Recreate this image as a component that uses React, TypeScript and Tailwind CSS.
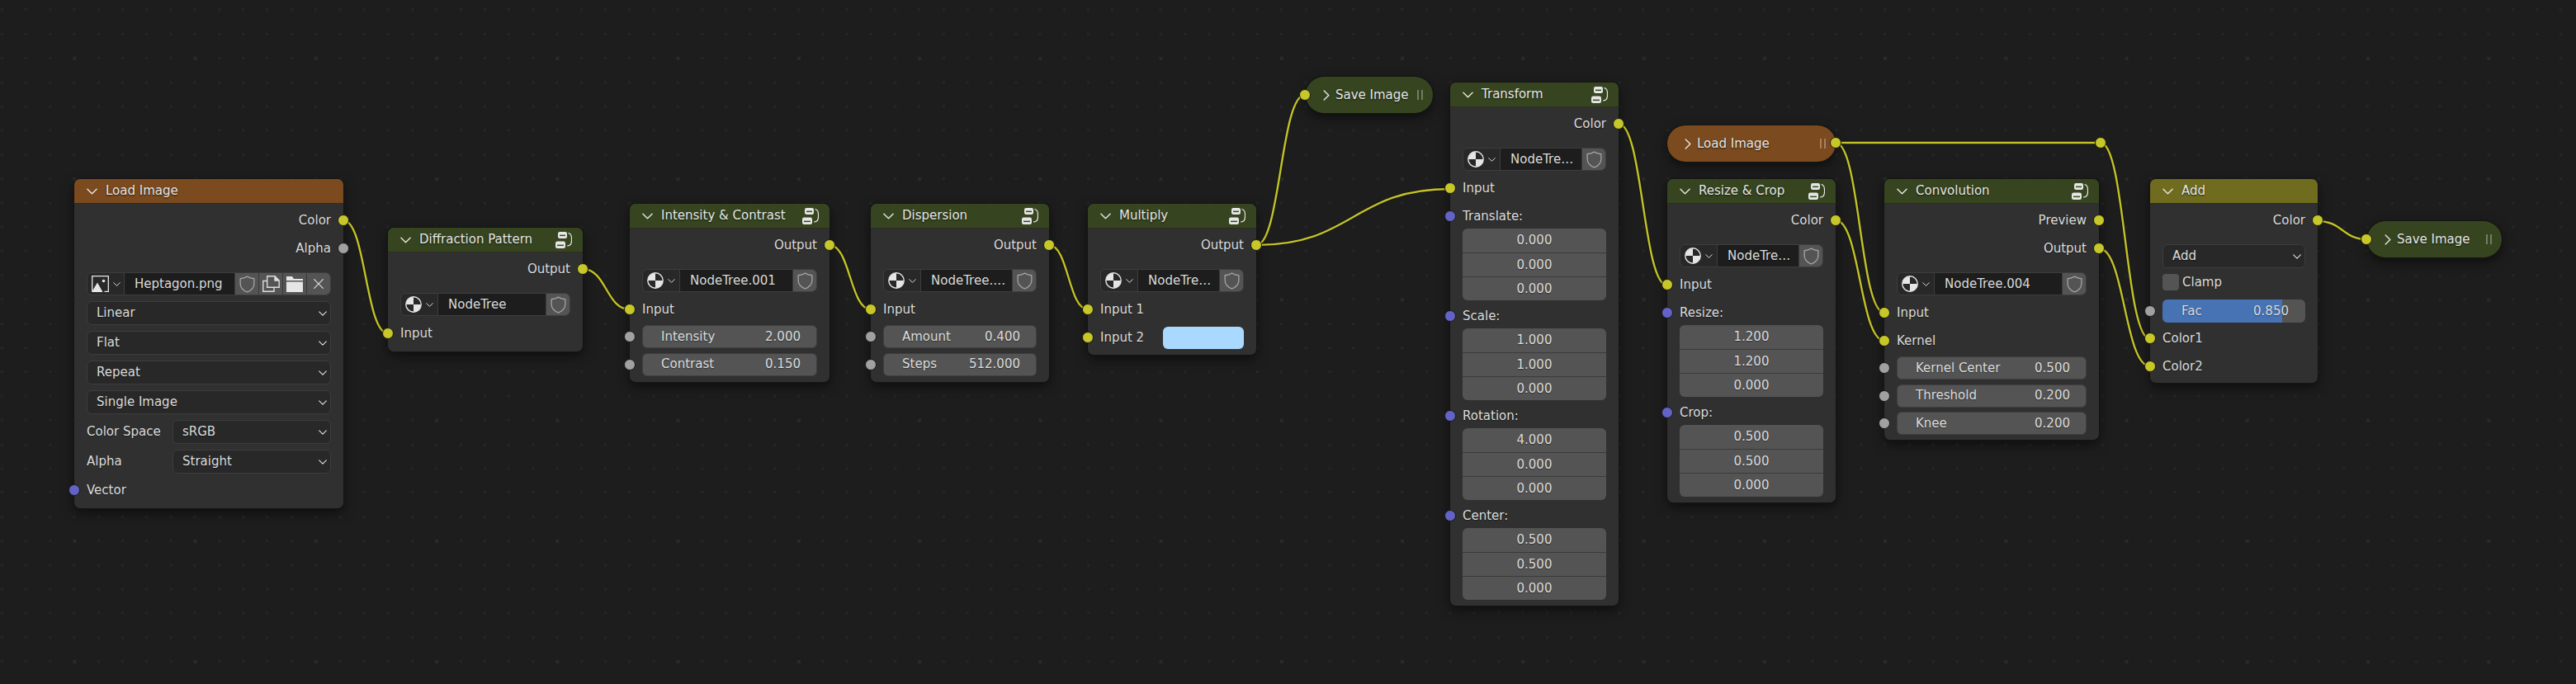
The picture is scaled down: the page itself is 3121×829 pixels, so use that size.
import React from 'react';

const WIRES: [number, number, number, number][] = [
  [416, 267, 470, 404],
  [706, 326, 763, 375],
  [1005, 297, 1055, 375],
  [1271, 297, 1318, 375],
  [1522, 297, 1581, 115],
  [1522, 297, 1757, 229],
  [1961, 150, 2020, 346],
  [2224, 267, 2283, 413],
  [2224, 173, 2283, 379],
  [2224, 173, 2545, 173],
  [2545, 173, 2605, 411],
  [2543, 301, 2605, 444],
  [2808, 268, 2868, 290],
];

function wirePath([x1, y1, x2, y2]: [number, number, number, number]) {
  const h = (x2 - x1) * 0.5;
  return `M${x1} ${y1} C${x1 + h} ${y1} ${x2 - h} ${y2} ${x2} ${y2}`;
}

function ChevronDown({ className }: { className?: string }) {
  return (
    <svg viewBox="0 0 14 8" className={className} fill="none" stroke="currentColor" strokeWidth="1.5" strokeLinecap="round" strokeLinejoin="round">
      <path d="M1 1l6 6 6-6" />
    </svg>
  );
}

function ChevronRight() {
  return (
    <svg viewBox="0 0 8 14" className="h-[13px] w-[8px] shrink-0 text-[#e6e6e6]" fill="none" stroke="currentColor" strokeWidth="1.5" strokeLinecap="round" strokeLinejoin="round">
      <path d="M1 1l6 6-6 6" />
    </svg>
  );
}

function GroupIcon() {
  return (
    <svg viewBox="0 0 20 20" className="h-[20px] w-[20px] shrink-0">
      <rect x="3" y="0" width="11" height="8" rx="2.2" fill="#e6e6e6" />
      <rect x="5" y="3.6" width="7" height="1.5" fill="#3a4722" />
      <rect x="0" y="11.5" width="12" height="8.5" rx="2.2" fill="#e6e6e6" />
      <rect x="2" y="15.6" width="8" height="1.5" fill="#3a4722" />
      <path d="M15.5 1.5c3 .6 4 3 4 6.5v2.5c0 4-1.5 6.500-5.500 6.500" fill="none" stroke="#e6e6e6" strokeWidth="1.200" />
    </svg>
  );
}

function TreeIcon() {
  return (
    <svg viewBox="0 0 20 20" className="h-[20px] w-[20px] shrink-0">
      <circle cx="10" cy="10" r="9.200" fill="none" stroke="#e6e6e6" strokeWidth="1.400" />
      <path d="M10 1A9 9 0 0 0 1 10H10Z" fill="#e6e6e6" />
      <path d="M10 10H19A9 9 0 0 1 10 19Z" fill="#e6e6e6" />
    </svg>
  );
}

function ImageIcon() {
  return (
    <svg viewBox="0 0 21 20" className="h-[20px] w-[21px] shrink-0">
      <path d="M.7 19V.7H20.300V19.300H15.500" fill="none" stroke="#e6e6e6" strokeWidth="1.300" />
      <path d="M0 20L7 8.500L13.500 20Z" fill="#e6e6e6" />
      <circle cx="14.500" cy="6.500" r="1.800" fill="#e6e6e6" />
    </svg>
  );
}

function Shield() {
  return (
    <svg viewBox="0 0 20 22" className="h-[21px] w-[19px]" fill="none" stroke="#a3a3a3" strokeWidth="1.400" strokeLinejoin="round">
      <path d="M10 1.200c2.500 1.500 5.500 2.400 8.800 2.700v6.300c0 5-3.500 8.700-8.800 10.600C4.700 18.900 1.200 15.200 1.200 10.200V3.900C4.500 3.600 7.500 2.700 10 1.200Z" />
    </svg>
  );
}

function CopyIcon() {
  return (
    <svg viewBox="0 0 21 20" className="h-[20px] w-[21px]" fill="none" stroke="#dcdcdc" strokeWidth="1.400">
      <path d="M5 6.500H.8V19.200H14V15" />
      <path d="M5.700 .8H15L20.200 6V14.200H5.700Z" />
      <path d="M15 .8V6H20.200" fill="#dcdcdc" />
    </svg>
  );
}

function FolderIcon() {
  return (
    <svg viewBox="0 0 20 19" className="h-[19px] w-[20px]" fill="#e6e6e6">
      <path d="M0 0H7L9 3H20V5H0Z" />
      <path d="M0 6.500H20V19H0Z" />
    </svg>
  );
}

function CloseIcon() {
  return (
    <svg viewBox="0 0 12 12" className="h-[12px] w-[12px]" fill="none" stroke="#dcdcdc" strokeWidth="1.200" strokeLinecap="round">
      <path d="M.7 .7l10.600 10.600M11.300 .7L.7 11.300" />
    </svg>
  );
}

type SocketKind = 'color' | 'float' | 'vector';

function Socket({ kind = 'color', className = '' }: { kind?: SocketKind; className?: string }) {
  const bg = kind === 'color' ? 'bg-[#c7c729]' : kind === 'float' ? 'bg-[#a1a1a1]' : 'bg-[#6363c7]';
  return <span className={`absolute z-10 h-[14px] w-[14px] rounded-full border-[1.5px] border-[#191919] ${bg} ${className}`} />;
}

function Node({ pos, header, title, group = true, children }: { pos: string; header: string; title: string; group?: boolean; children: React.ReactNode }) {
  return (
    <div className={`absolute z-[2] flex flex-col rounded-[7px] bg-[#303030] shadow-[0_0_0_1px_#141414,0_5px_14px_rgba(0,0,0,0.55)] ${pos}`}>
      <div className={`flex h-[30px] shrink-0 items-center rounded-t-[7px] border-b border-[#2a2f20] pl-[15px] pr-[13px] ${header}`}>
        <ChevronDown className="mr-[10px] h-[8px] w-[13px] shrink-0 text-[#e6e6e6]" />
        <span className="flex-1 whitespace-nowrap text-[#e6e6e6] [text-shadow:0_1px_2px_rgba(0,0,0,0.7)]">{title}</span>
        {group && <GroupIcon />}
      </div>
      <div className="flex flex-col px-[15px]">{children}</div>
    </div>
  );
}

function Out({ label }: { label: string }) {
  return (
    <div className="relative flex h-[34px] items-center justify-end">
      <span>{label}</span>
      <Socket className="right-[-22px] top-[10px]" />
    </div>
  );
}

function In({ label, kind = 'color' }: { label: string; kind?: SocketKind }) {
  return (
    <div className="relative flex h-[34px] items-center">
      <span>{label}</span>
      <Socket kind={kind} className="left-[-22px] top-[10px]" />
    </div>
  );
}

function Slider({ label, value, mt = 'mt-[5.5px]' }: { label: string; value: string; mt?: string }) {
  return (
    <div className={`relative flex h-[28px] items-center justify-between rounded-[6px] border border-[#3f3f3f] bg-[#545454] pl-[22px] pr-[19px] ${mt}`}>
      <span>{label}</span>
      <span>{value}</span>
      <Socket kind="float" className="left-[-23px] top-[6px]" />
    </div>
  );
}

function Vec({ values }: { values: string[] }) {
  return (
    <div className="-mt-[2px] mb-[2px] flex flex-col overflow-hidden rounded-[6px] bg-[#545454]">
      {values.map((v, i) => (
        <div key={i} className={`flex h-[29px] items-center justify-center ${i > 0 ? 'border-t border-[#3a3a3a]' : ''}`}>
          {v}
        </div>
      ))}
    </div>
  );
}

function Dropdown({ label, className = '' }: { label: string; className?: string }) {
  return (
    <div className={`flex h-[29px] items-center justify-between rounded-[6px] border border-[#3d3d3d] bg-[#282828] pl-[11px] pr-[4px] ${className}`}>
      <span>{label}</span>
      <ChevronDown className="h-[6px] w-[10px] text-[#e6e6e6]" />
    </div>
  );
}

function IconButton({ children }: { children: React.ReactNode }) {
  return <div className="flex h-full w-[29px] shrink-0 items-center justify-center border-l border-[#3a3a3a] bg-[#545454]">{children}</div>;
}

function Template({ name, icon = <TreeIcon />, children }: { name: string; icon?: React.ReactNode; children?: React.ReactNode }) {
  return (
    <div className="mt-[12px] flex h-[28px] items-center overflow-hidden rounded-[6px] border border-[#3d3d3d] bg-[#282828]">
      <div className="flex h-full w-[45px] shrink-0 items-center gap-[5px] border-r border-[#3d3d3d] pl-[5px]">
        {icon}
        <ChevronDown className="h-[5px] w-[9px] shrink-0 text-[#e6e6e6]" />
      </div>
      <div className="h-full min-w-0 flex-1 overflow-hidden whitespace-nowrap bg-[#1d1d1d] pl-[12px] leading-[26px]">{name}</div>
      <IconButton>
        <Shield />
      </IconButton>
      {children}
    </div>
  );
}

function Pill({ pos, color, title, side }: { pos: string; color: string; title: string; side: 'left' | 'right' }) {
  return (
    <div className={`absolute z-[2] flex h-[44px] items-center rounded-full pl-[21px] shadow-[0_0_0_1px_#141414,0_5px_14px_rgba(0,0,0,0.55)] ${color} ${pos}`}>
      <ChevronRight />
      <span className="ml-[7px] text-[#e6e6e6] [text-shadow:0_1px_2px_rgba(0,0,0,0.7)]">{title}</span>
      <span className="absolute right-[12px] top-[16px] flex gap-[3px]">
        <span className="h-[12px] w-[2px] bg-white/30" />
        <span className="h-[12px] w-[2px] bg-white/30" />
      </span>
      <Socket className={side === 'left' ? 'left-[-8px] top-[15px]' : 'right-[-7px] top-[14px]'} />
    </div>
  );
}

// canvas dots: every fifth one, in both directions, is a little larger
function GridDots() {
  const steps = [0, 1, 2, 3, 4];
  return (
    <svg className="absolute inset-0 h-full w-full" shapeRendering="crispEdges">
      <defs>
        <pattern id="dots" x="75.4" y="55.9" width="146.25" height="146.25" patternUnits="userSpaceOnUse">
          {steps.map((i) =>
            steps.map((j) => {
              const major = i === 0 && j === 0;
              const size = major ? 4 : 3;
              return (
                <rect
                  key={`${i}-${j}`}
                  x={14.6 + i * 29.25 - size / 2}
                  y={14.6 + j * 29.25 - size / 2}
                  width={size}
                  height={size}
                  fill={major ? '#2a2a2a' : '#262626'}
                />
              );
            }),
          )}
        </pattern>
      </defs>
      <rect width="100%" height="100%" fill="url(#dots)" />
    </svg>
  );
}

const GREEN = 'bg-[#36451f]';

export default function App() {
  return (
    <div className="relative h-[829px] w-[3121px] overflow-hidden bg-[#1d1d1d] font-[family-name:'DejaVu_Sans',sans-serif] text-[15px] text-[#dcdcdc] [text-shadow:0_1px_1px_rgba(0,0,0,0.45)]">
      <GridDots />

      <svg className="absolute inset-0 z-[1] h-full w-full" fill="none">
        {WIRES.map((w, i) => (
          <g key={i}>
            <path d={wirePath(w)} stroke="#141414" strokeOpacity="0.7" strokeWidth="4.500" />
            <path d={wirePath(w)} stroke="#c2c228" strokeWidth="2.400" />
          </g>
        ))}
      </svg>

      <Socket className="left-[2538px] top-[166px]" />

      <Node pos="left-[90px] top-[217px] w-[326px]" header="bg-[#7b4a1e]" title="Load Image" group={false}>
        <div className="pt-[3px]" />
        <Out label="Color" />
        <div className="relative flex h-[34px] items-center justify-end">
          <span>Alpha</span>
          <Socket kind="float" className="right-[-22px] top-[10px]" />
        </div>
        <Template name="Heptagon.png" icon={<ImageIcon />}>
          <IconButton>
            <CopyIcon />
          </IconButton>
          <IconButton>
            <FolderIcon />
          </IconButton>
          <IconButton>
            <CloseIcon />
          </IconButton>
        </Template>
        <Dropdown label="Linear" className="mt-[7px]" />
        <Dropdown label="Flat" className="mt-[7px]" />
        <Dropdown label="Repeat" className="mt-[7px]" />
        <Dropdown label="Single Image" className="mt-[7px]" />
        <div className="mt-[7px] flex items-center">
          <span className="w-[104px]">Color Space</span>
          <Dropdown label="sRGB" className="flex-1" />
        </div>
        <div className="mt-[7px] flex items-center">
          <span className="w-[104px]">Alpha</span>
          <Dropdown label="Straight" className="flex-1" />
        </div>
        <div className="mt-[3px]" />
        <In label="Vector" kind="vector" />
        <div className="pb-[5px]" />
      </Node>

      <Node pos="left-[470px] top-[276px] w-[236px]" header={GREEN} title="Diffraction Pattern">
        <div className="pt-[3px]" />
        <Out label="Output" />
        <Template name="NodeTree" />
        <div className="mt-[4px]" />
        <In label="Input" />
        <div className="pb-[5px]" />
      </Node>

      <Node pos="left-[763px] top-[247px] w-[242px]" header={GREEN} title="Intensity & Contrast">
        <div className="pt-[3px]" />
        <Out label="Output" />
        <Template name="NodeTree.001" />
        <div className="mt-[4px]" />
        <In label="Input" />
        <Slider label="Intensity" value="2.000" mt="mt-[2px]" />
        <Slider label="Contrast" value="0.150" />
        <div className="pb-[7px]" />
      </Node>

      <Node pos="left-[1055px] top-[247px] w-[216px]" header={GREEN} title="Dispersion">
        <div className="pt-[3px]" />
        <Out label="Output" />
        <Template name="NodeTree.…" />
        <div className="mt-[4px]" />
        <In label="Input" />
        <Slider label="Amount" value="0.400" mt="mt-[2px]" />
        <Slider label="Steps" value="512.000" />
        <div className="pb-[7px]" />
      </Node>

      <Node pos="left-[1318px] top-[247px] w-[204px]" header={GREEN} title="Multiply">
        <div className="pt-[3px]" />
        <Out label="Output" />
        <Template name="NodeTre…" />
        <div className="mt-[4px]" />
        <In label="Input 1" />
        <div className="relative flex h-[34px] items-center">
          <span className="w-[76px]">Input 2</span>
          <div className="h-[27px] flex-1 rounded-[6px] bg-[#a9d9ff]" />
          <Socket className="left-[-22px] top-[10px]" />
        </div>
        <div className="pb-[4px]" />
      </Node>

      <Pill pos="left-[1582px] top-[93px] w-[154px]" color={GREEN} title="Save Image" side="left" />

      <Node pos="left-[1757px] top-[100px] w-[204px]" header={GREEN} title="Transform">
        <div className="pt-[3px]" />
        <Out label="Color" />
        <Template name="NodeTre…" />
        <div className="mt-[4px]" />
        <In label="Input" />
        <In label="Translate:" kind="vector" />
        <Vec values={['0.000', '0.000', '0.000']} />
        <In label="Scale:" kind="vector" />
        <Vec values={['1.000', '1.000', '0.000']} />
        <In label="Rotation:" kind="vector" />
        <Vec values={['4.000', '0.000', '0.000']} />
        <In label="Center:" kind="vector" />
        <Vec values={['0.500', '0.500', '0.000']} />
        <div className="pb-[5px]" />
      </Node>

      <Pill pos="left-[2020px] top-[152px] w-[204px]" color="bg-[#7b4a1e]" title="Load Image" side="right" />

      <Node pos="left-[2020px] top-[217px] w-[204px]" header={GREEN} title="Resize & Crop">
        <div className="pt-[3px]" />
        <Out label="Color" />
        <Template name="NodeTre…" />
        <div className="mt-[4px]" />
        <In label="Input" />
        <In label="Resize:" kind="vector" />
        <Vec values={['1.200', '1.200', '0.000']} />
        <In label="Crop:" kind="vector" />
        <Vec values={['0.500', '0.500', '0.000']} />
        <div className="pb-[5px]" />
      </Node>

      <Node pos="left-[2283px] top-[217px] w-[260px]" header={GREEN} title="Convolution">
        <div className="pt-[3px]" />
        <Out label="Preview" />
        <Out label="Output" />
        <Template name="NodeTree.004" />
        <div className="mt-[4px]" />
        <In label="Input" />
        <In label="Kernel" />
        <Slider label="Kernel Center" value="0.500" mt="mt-[2px]" />
        <Slider label="Threshold" value="0.200" />
        <Slider label="Knee" value="0.200" />
        <div className="pb-[6px]" />
      </Node>

      <Node pos="left-[2605px] top-[217px] w-[203px]" header="bg-[#6f6b1f]" title="Add" group={false}>
        <div className="pt-[3px]" />
        <Out label="Color" />
        <Dropdown label="Add" className="mt-[12px]" />
        <div className="mt-[7px] flex h-[20px] items-center gap-[4px]">
          <span className="h-[20px] w-[20px] rounded-[4px] bg-[#545454]" />
          <span>Clamp</span>
        </div>
        <div className="relative mt-[11px] flex h-[28px] items-center justify-between overflow-visible rounded-[6px] bg-[#545454] pl-[23px] pr-[20px]">
          <div className="absolute inset-y-0 left-0 w-[145px] rounded-l-[6px] bg-[#4772b3]" />
          <span className="relative">Fac</span>
          <span className="relative">0.850</span>
          <Socket kind="float" className="left-[-22px] top-[7px]" />
        </div>
        <div className="mt-[2px]" />
        <In label="Color1" />
        <In label="Color2" />
        <div className="pb-[3px]" />
      </Node>

      <Pill pos="left-[2868px] top-[268px] w-[163px]" color={GREEN} title="Save Image" side="left" />
    </div>
  );
}
